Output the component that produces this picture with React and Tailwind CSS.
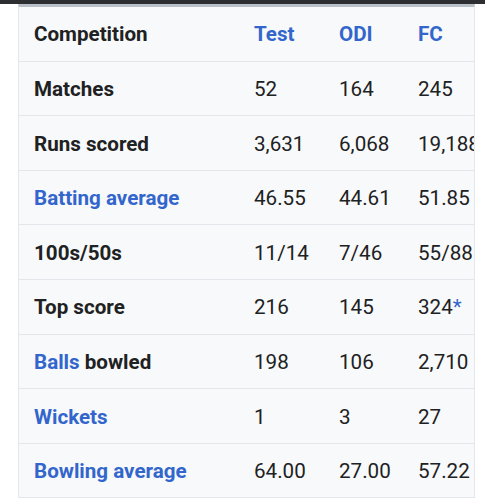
import React from "react";

const B = "text-[#3366cc]";

const rows = [
  { label: <span>Matches</span>, v: ["52", "164", "245"] },
  { label: <span>Runs scored</span>, v: ["3,631", "6,068", "19,188"] },
  { label: <span className={B}>Batting average</span>, v: ["46.55", "44.61", "51.85"] },
  { label: <span>100s/50s</span>, v: ["11/14", "7/46", "55/88"] },
  { label: <span>Top score</span>, v: ["216", "145", <span key="t">324<span className={B}>*</span></span>] },
  { label: <span><span className={B}>Balls</span> bowled</span>, v: ["198", "106", "2,710"] },
  { label: <span className={B}>Wickets</span>, v: ["1", "3", "27"] },
  { label: <span className={B}>Bowling average</span>, v: ["64.00", "27.00", "57.22"] },
];

function Row({ label, v, header }) {
  return (
    <div className="flex items-center h-[54.6px] pt-[2px] border-b border-[#e3e6ea] whitespace-nowrap">
      <div className="w-[235px] shrink-0 pl-[15px] font-bold">{label}</div>
      <div className={"w-[85px] shrink-0 " + (header ? "font-bold " + B : "")}>{v[0]}</div>
      <div className={"w-[79px] shrink-0 " + (header ? "font-bold " + B : "")}>{v[1]}</div>
      <div className={"w-[80px] shrink-0 " + (header ? "font-bold " + B : "")}>{v[2]}</div>
    </div>
  );
}

export default function App() {
  return (
    <div className="w-[485px] h-[500px] bg-white overflow-hidden text-[20.6px] text-[#202122]" style={{ fontFamily: "Roboto, 'Liberation Sans', sans-serif" }}>
      <div className="h-[4px] bg-[#2d2e31]" />
      <div className="ml-[18px] w-[457px] border-x border-[#e3e6ea] border-t-[3px] border-t-[#b9c0c8] bg-[#f8f9fa] overflow-hidden">
        <Row header label={<span>Competition</span>} v={["Test", "ODI", "FC"]} />
        {rows.map((r, i) => (
          <Row key={i} label={r.label} v={r.v} />
        ))}
      </div>
    </div>
  );
}
